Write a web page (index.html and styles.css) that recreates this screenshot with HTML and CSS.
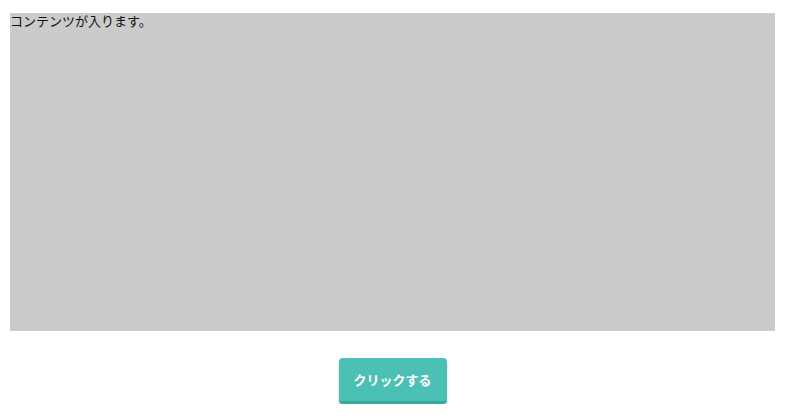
FILE: index.html
```html
<!DOCTYPE html>
<html lang="ja">
<head>
<meta charset="utf-8">
<link rel="stylesheet" href="styles.css">
</head>
<body>
<div class="page">
  <div class="content">コンテンツが入ります。</div>
  <div class="actions">
    <button class="btn" type="button">クリックする</button>
  </div>
</div>
</body>
</html>
```
FILE: styles.css
```css
html, body {
  margin: 0;
  padding: 0;
  background: #fff;
}
body {
  font-family: "Noto Sans CJK JP", "Noto Sans", sans-serif;
  color: #111;
}
.page {
  padding: 13px 25px 0 10px;
}
.content {
  background: #cbcbcb;
  height: 318px;
  font-size: 13px;
  line-height: 16px;
}
.actions {
  display: flex;
  justify-content: center;
  margin-top: 27px;
}
.btn {
  font-family: "Noto Sans CJK JP", "Noto Sans", sans-serif;
  font-size: 13px;
  font-weight: 700;
  color: #fff;
  background: #4dc0b5;
  border: 0;
  border-bottom: 3px solid #38a89d;
  border-radius: 4px;
  width: 108px;
  height: 46px;
  padding: 0;
  box-shadow: 0 2px 3px rgba(0,0,0,0.2);
}
```
